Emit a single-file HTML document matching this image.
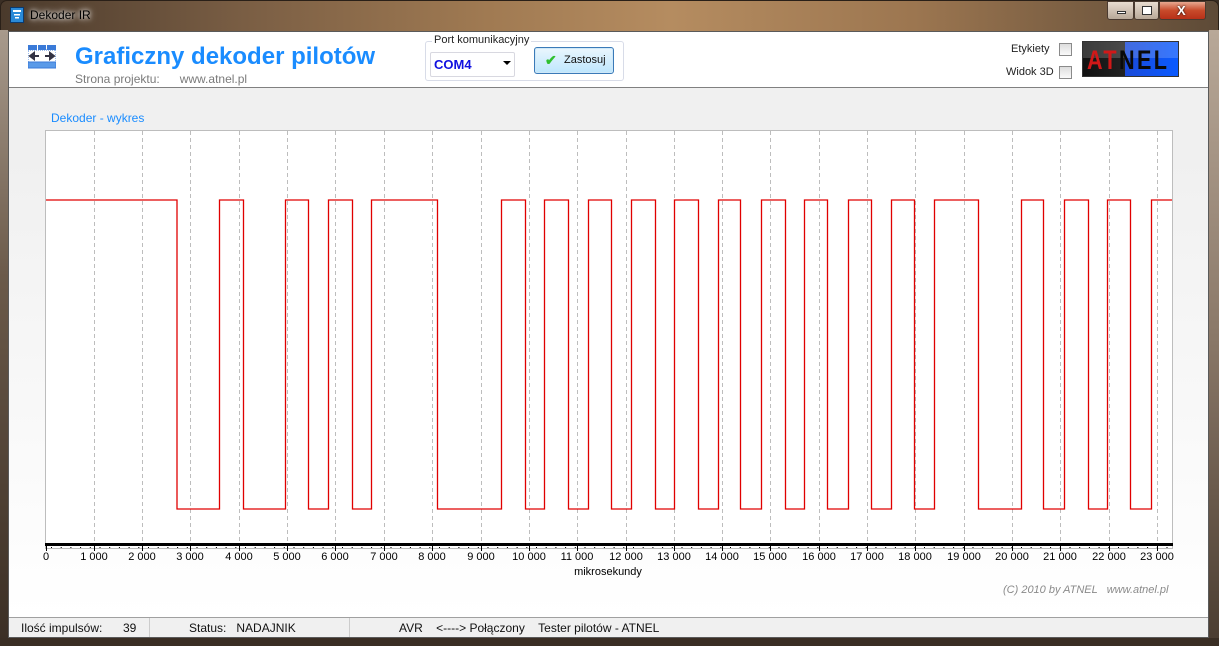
<!DOCTYPE html>
<html><head><meta charset="utf-8"><style>
*{margin:0;padding:0;box-sizing:border-box}
body{width:1219px;height:646px;overflow:hidden;position:relative;font-family:"Liberation Sans",sans-serif;background:#3a2e24}
.frame{position:absolute;left:0;top:0;width:1219px;height:646px;background:linear-gradient(90deg,#4a3a2c 0%,#7a5e44 20%,#a07a52 40%,#b58c60 55%,#9c7650 75%,#5d4a37 100%);border-radius:7px 7px 0 0;border:1px solid #2a2018}
.sidebar{position:absolute;left:0;top:30px;width:8px;height:616px;background:linear-gradient(#a89a8c,#6b5a4a 40%,#3a2e24)}
.sidebarR{position:absolute;right:0;top:30px;width:10px;height:616px;background:linear-gradient(#b8a898,#8a7868 50%,#4a3c30)}
.bottomB{position:absolute;left:0;top:638px;width:1219px;height:8px;background:#3a2e24}
.title{position:absolute;left:30px;top:8px;font-size:12px;color:#000;text-shadow:0 0 8px #fff,0 0 4px #fff}
.client{position:absolute;left:8px;top:31px;width:1201px;height:607px;background:#f0f0f0;border:1px solid #5a5a5a}
.header{position:absolute;left:0;top:0;width:1199px;height:56px;background:#fff;border-bottom:1px solid #808080}
.btns{position:absolute;left:1107px;top:1px;width:105px;height:19px}
.btn{position:absolute;top:0;height:19px;border:1px solid #4a3a30;border-radius:0 0 3px 3px;background:linear-gradient(#e8dcd0,#b8a898)}
</style></head><body>
<div class="frame"></div>
<div class="sidebar"></div><div class="sidebarR"></div><div class="bottomB"></div>
<svg style="position:absolute;left:10px;top:7px" width="14" height="16"><rect x="0.5" y="0.5" width="13" height="15" fill="#2a8ad8" stroke="#0a3a70"/><rect x="3" y="3" width="8" height="2" fill="#fff"/><rect x="4" y="7" width="6" height="1.5" fill="#fff"/><rect x="5" y="10" width="4" height="1.5" fill="#fff"/></svg>
<div class="title">Dekoder IR</div>
<div class="btns">
<div class="btn" style="left:0;width:27px"><div style="position:absolute;left:9px;top:9px;width:9px;height:3px;background:#fff;border:1px solid #333"></div></div>
<div class="btn" style="left:27px;width:25px"><div style="position:absolute;left:7px;top:4px;width:10px;height:9px;border:1px solid #333;background:#fff"></div></div>
<div class="btn" style="left:52px;width:47px;background:linear-gradient(#e8a890,#c84a2a 50%,#b83018)"><div style="position:absolute;left:17px;top:1px;color:#fff;font-weight:bold;font-size:13px;text-shadow:0 0 2px #000">X</div></div>
</div>
<div class="client">
<div class="header">
<svg style="position:absolute;left:19px;top:13px" width="28" height="24"><rect x="0" y="0" width="28" height="5" fill="#3a7ad8"/><rect x="9" y="0" width="1" height="5" fill="#fff"/><rect x="18" y="0" width="1" height="5" fill="#fff"/><rect x="0" y="5" width="28" height="12" fill="#fff" stroke="#3a7ad8" stroke-dasharray="1 1"/><path d="M2 11h9M2 11l4-3v6zM26 11h-9M26 11l-4-3v6z" stroke="#334" stroke-width="2" fill="#334"/><rect x="0" y="17" width="28" height="6" fill="#5a9ae8" stroke="#3a7ad8"/></svg>
<div style="position:absolute;left:66px;top:11px;font-size:24px;font-weight:bold;color:#1a8cff">Graficzny dekoder pilotów</div>
<div style="position:absolute;left:66px;top:40px;font-size:12px;color:#7a7a7a">Strona projektu: &nbsp;&nbsp;&nbsp;&nbsp;&nbsp;www.atnel.pl</div>
<div style="position:absolute;left:416px;top:9px;width:199px;height:40px;border:1px solid #d8dce8;border-radius:3px"></div>
<div style="position:absolute;left:423px;top:2px;background:#fff;padding:0 2px;font-size:11px;color:#222">Port komunikacyjny</div>
<div style="position:absolute;left:421px;top:20px;width:85px;height:25px;border:1px solid #d8d8e0;border-radius:2px;background:#fff"><span style="position:absolute;left:3px;top:4px;color:#1010e0;font-weight:bold;font-size:13px">COM4</span><span style="position:absolute;left:72px;top:8px;width:0;height:0;border-left:4px solid transparent;border-right:4px solid transparent;border-top:4px solid #000"></span></div>
<div style="position:absolute;left:525px;top:15px;width:80px;height:27px;border:1px solid #3a7ab8;border-radius:3px;background:linear-gradient(#eaf6fd,#bee6fd);box-shadow:inset 0 0 0 1px #cfe8f8"><span style="position:absolute;left:10px;top:4px;color:#30c030;font-size:14px;font-weight:bold">✔</span><span style="position:absolute;left:29px;top:6px;font-size:11px;color:#111">Zastosuj</span></div>
<div style="position:absolute;left:1002px;top:11px;font-size:11px;color:#222">Etykiety</div>
<div style="position:absolute;left:997px;top:34px;font-size:11px;color:#222">Widok 3D</div>
<div style="position:absolute;left:1050px;top:11px;width:13px;height:13px;border:1px solid #8a8a8a;background:linear-gradient(#ddd,#fafafa)"></div>
<div style="position:absolute;left:1050px;top:34px;width:13px;height:13px;border:1px solid #8a8a8a;background:linear-gradient(#ddd,#fafafa)"></div>
<div style="position:absolute;left:1073px;top:9px;width:97px;height:36px;border:1px solid #333;background:linear-gradient(90deg,#111 0%,#222 44%,#1a4ad8 44%,#0a5aff 100%);overflow:hidden"><div style="position:absolute;left:0;top:0;width:97px;height:16px;background:rgba(255,255,255,.18)"></div><span style="position:absolute;left:4px;top:3px;font-size:27px;font-weight:bold;line-height:30px;transform:scaleX(0.8);transform-origin:left;white-space:nowrap;letter-spacing:3px"><span style="color:#d01818">AT</span><span style="color:#0a0a0a">NEL</span></span></div>
</div>
<div style="position:absolute;left:0;top:57px;width:1199px;height:528px;background:linear-gradient(#f0f0f0 0%,#f0f0f0 12%,#fff 100%)"></div>
<div style="position:absolute;left:42px;top:79px;font-size:12px;color:#1a8cff">Dekoder - wykres</div>
<div style="position:absolute;left:994px;top:552px;font-size:11px;font-style:italic;color:#8a8a8a">(C) 2010 by ATNEL &nbsp;&nbsp;www.atnel.pl</div>
<div style="position:absolute;left:0;top:585px;width:1199px;height:20px;background:#f0f0f0;border-top:1px solid #a0a0a0;font-size:12px;color:#111">
<span style="position:absolute;left:12px;top:3px">Ilość impulsów:</span><span style="position:absolute;left:114px;top:3px">39</span>
<span style="position:absolute;left:140px;top:0;width:1px;height:19px;background:#ccc"></span>
<span style="position:absolute;left:180px;top:3px">Status: &nbsp;&nbsp;NADAJNIK</span>
<span style="position:absolute;left:340px;top:0;width:1px;height:19px;background:#ccc"></span>
<span style="position:absolute;left:390px;top:3px">AVR &nbsp;&nbsp;&nbsp;&lt;----&gt; Połączony &nbsp;&nbsp;&nbsp;Tester pilotów - ATNEL</span>
</div>
</div>
<svg style="position:absolute;left:0;top:0" width="1219" height="646" font-family="Liberation Sans,sans-serif">
<rect x="45.5" y="130.5" width="1127" height="418" fill="#fff" stroke="#bdbdbd"/>
<g stroke="#bdbdbd" stroke-dasharray="4 3" stroke-width="1">
<path d="M94.5 131V543M142.5 131V543M190.5 131V543M239.5 131V543M287.5 131V543M335.5 131V543M384.5 131V543M432.5 131V543M481.5 131V543M529.5 131V543M577.5 131V543M626.5 131V543M674.5 131V543M722.5 131V543M770.5 131V543M819.5 131V543M867.5 131V543M915.5 131V543M964.5 131V543M1012.5 131V543M1060.5 131V543M1109.5 131V543M1157.5 131V543"/>
</g>
<polyline fill="none" stroke="#e00000" stroke-width="1.3" points="46,200 177,200 177,509 219.5,509 219.5,200 243.5,200 243.5,509 285.5,509 285.5,200 308.5,200 308.5,509 328.5,509 328.5,200 352.5,200 352.5,509 371.5,509 371.5,200 437.5,200 437.5,509 501.5,509 501.5,200 525.5,200 525.5,509 544.5,509 544.5,200 568.5,200 568.5,509 588.5,509 588.5,200 611.5,200 611.5,509 631.5,509 631.5,200 655.5,200 655.5,509 674.5,509 674.5,200 698.5,200 698.5,509 718.5,509 718.5,200 740.5,200 740.5,509 761.5,509 761.5,200 785.5,200 785.5,509 804.5,509 804.5,200 827.5,200 827.5,509 848.5,509 848.5,200 871.5,200 871.5,509 891.5,509 891.5,200 914.5,200 914.5,509 934.5,509 934.5,200 978.5,200 978.5,509 1021.5,509 1021.5,200 1043.5,200 1043.5,509 1064.5,509 1064.5,200 1088.5,200 1088.5,509 1107.5,509 1107.5,200 1130.5,200 1130.5,509 1151.5,509 1151.5,200 1172,200"/>
<rect x="45" y="543" width="1128" height="3" fill="#000"/>
<g font-size="11" fill="#000" text-anchor="middle">
<text x="46" y="560">0</text><text x="94" y="560">1 000</text><text x="142" y="560">2 000</text><text x="190" y="560">3 000</text><text x="239" y="560">4 000</text><text x="287" y="560">5 000</text><text x="335" y="560">6 000</text><text x="384" y="560">7 000</text><text x="432" y="560">8 000</text><text x="481" y="560">9 000</text><text x="529" y="560">10 000</text><text x="577" y="560">11 000</text><text x="626" y="560">12 000</text><text x="674" y="560">13 000</text><text x="722" y="560">14 000</text><text x="770" y="560">15 000</text><text x="819" y="560">16 000</text><text x="867" y="560">17 000</text><text x="915" y="560">18 000</text><text x="964" y="560">19 000</text><text x="1012" y="560">20 000</text><text x="1060" y="560">21 000</text><text x="1109" y="560">22 000</text><text x="1157" y="560">23 000</text>
<text x="608" y="575">mikrosekundy</text>
</g>
<path stroke="#000" d="M46.5 546v5M94.5 546v5M142.5 546v5M190.5 546v5M239.5 546v5M287.5 546v5M335.5 546v5M384.5 546v5M432.5 546v5M481.5 546v5M529.5 546v5M577.5 546v5M626.5 546v5M674.5 546v5M722.5 546v5M770.5 546v5M819.5 546v5M867.5 546v5M915.5 546v5M964.5 546v5M1012.5 546v5M1060.5 546v5M1109.5 546v5M1157.5 546v5"/>
<path stroke="#000" stroke-dasharray="1 8.7" d="M51 547.5H1172"/>
</svg>
</body></html>
